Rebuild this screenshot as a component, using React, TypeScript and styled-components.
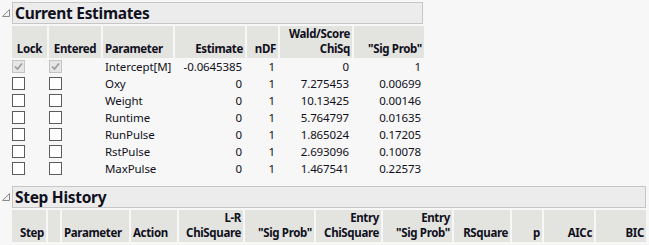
import styled, { createGlobalStyle } from 'styled-components';

const Global = createGlobalStyle`
  body {
    margin: 0;
    background: #f7f7f7;
    font-family: "Noto Sans", "Open Sans", sans-serif;
    color: #101020;
  }
`;

const Page = styled.div`
  width: 649px;
  height: 245px;
  overflow: hidden;
  padding-top: 2px;
  box-sizing: border-box;
`;

const Outline = styled.div<{ width: number; gapBelow: number }>`
  width: ${(p) => p.width + 12}px;
  margin-bottom: ${(p) => p.gapBelow}px;
`;

const TitleRow = styled.div`
  display: flex;
  align-items: center;
`;

const Toggle = styled.div`
  width: 12px;
  height: 22px;
  display: flex;
  align-items: center;
  justify-content: center;
`;

const TitleBar = styled.div`
  flex: 1;
  height: 22px;
  box-sizing: border-box;
  background: #ececec;
  border: 1px solid #c6c6c6;
  font-weight: 700;
  font-size: 15.5px;
  line-height: 20px;
  padding-left: 2px;
  letter-spacing: -0.3px;
`;

const Body = styled.div`
  padding-left: 12px;
  padding-top: 2px;
`;

const Grid = styled.div<{ cols: string }>`
  display: grid;
  grid-template-columns: ${(p) => p.cols};
  column-gap: 2px;
  font-size: 11.5px;
`;

const Head = styled.div<{ align: string }>`
  background: #e3e3df;
  height: 32px;
  box-sizing: border-box;
  display: flex;
  flex-direction: column;
  justify-content: flex-end;
  align-items: ${(p) => p.align};
  text-align: ${(p) => (p.align === 'flex-end' ? 'right' : p.align === 'center' ? 'center' : 'left')};
  font-weight: 700;
  line-height: 15px;
  padding: 0 2px 2px 2px;
  white-space: nowrap;
  letter-spacing: -0.35px;
  overflow: hidden;
`;

const Cell = styled.div<{ align: string }>`
  height: 17px;
  line-height: 17px;
  text-align: ${(p) => p.align};
  padding: 0 3px 0 2px;
  white-space: nowrap;
  letter-spacing: -0.1px;
`;

const BoxCell = styled.div`
  height: 17px;
  display: flex;
  align-items: center;
`;

const Box = styled.div<{ checked?: boolean }>`
  width: 13px;
  height: 13px;
  box-sizing: border-box;
  border: 1px solid ${(p) => (p.checked ? '#c4c4c4' : '#5c5c5c')};
  background: ${(p) => (p.checked ? '#e6e6e6' : '#ffffff')};
  display: flex;
  align-items: center;
  justify-content: center;
`;

function Disclosure() {
  return (
    <Toggle>
      <svg width="10" height="10" viewBox="0 0 10 10">
        <polygon points="8.5,1.5 8.5,8.5 1.5,8.5" fill="#f2f2f2" stroke="#8a8a8a" strokeWidth="1" />
      </svg>
    </Toggle>
  );
}

function Check({ checked }: { checked?: boolean }) {
  return (
    <BoxCell>
      <Box checked={checked}>
        {checked && (
          <svg width="11" height="11" viewBox="0 0 11 11">
            <polyline points="2,5.5 4.5,8 9,2.5" fill="none" stroke="#9a9a9a" strokeWidth="1.6" />
          </svg>
        )}
      </Box>
    </BoxCell>
  );
}

const estimates = [
  ['Intercept[M]', '-0.0645385', '1', '0', '1'],
  ['Oxy', '0', '1', '7.275453', '0.00699'],
  ['Weight', '0', '1', '10.13425', '0.00146'],
  ['Runtime', '0', '1', '5.764797', '0.01635'],
  ['RunPulse', '0', '1', '1.865024', '0.17205'],
  ['RstPulse', '0', '1', '2.693096', '0.10078'],
  ['MaxPulse', '0', '1', '1.467541', '0.22573'],
];

const stepHeads: [string, string][] = [
  ['Step', 'flex-end'],
  ['', 'flex-start'],
  ['Parameter', 'flex-start'],
  ['Action', 'flex-start'],
  ['L-R\nChiSquare', 'flex-end'],
  ['"Sig Prob"', 'flex-end'],
  ['Entry\nChiSquare', 'flex-end'],
  ['Entry\n"Sig Prob"', 'flex-end'],
  ['RSquare', 'flex-end'],
  ['p', 'flex-end'],
  ['AICc', 'flex-end'],
  ['BIC', 'flex-end'],
];

function HeadText({ text }: { text: string }) {
  return (
    <>
      {text.split('\n').map((l, i) => (
        <span key={i}>{l}</span>
      ))}
    </>
  );
}

export default function App() {
  return (
    <>
      <Global />
      <Page>
        <Outline width={411} gapBelow={9}>
          <TitleRow>
            <Disclosure />
            <TitleBar>Current Estimates</TitleBar>
          </TitleRow>
          <Body>
            <Grid cols="35px 52px 70px 70px 31px 72px 70px">
              <Head align="center">Lock</Head>
              <Head align="center">Entered</Head>
              <Head align="flex-start">Parameter</Head>
              <Head align="flex-end">Estimate</Head>
              <Head align="flex-end">nDF</Head>
              <Head align="flex-end">
                <HeadText text={'Wald/Score\nChiSq'} />
              </Head>
              <Head align="flex-end">"Sig Prob"</Head>
              {estimates.map((r, i) => (
                <>
                  <Check key={'l' + i} checked={i === 0} />
                  <Check key={'e' + i} checked={i === 0} />
                  <Cell key={'p' + i} align="left">{r[0]}</Cell>
                  <Cell key={'s' + i} align="right">{r[1]}</Cell>
                  <Cell key={'n' + i} align="right">{r[2]}</Cell>
                  <Cell key={'c' + i} align="right">{r[3]}</Cell>
                  <Cell key={'g' + i} align="right">{r[4]}</Cell>
                </>
              ))}
            </Grid>
          </Body>
        </Outline>
        <Outline width={634} gapBelow={0}>
          <TitleRow>
            <Disclosure />
            <TitleBar>Step History</TitleBar>
          </TitleRow>
          <Body>
            <Grid cols="34px 12px 67px 46px 64px 69px 65px 69px 56px 30px 50px 50px">
              {stepHeads.map(([t, a], i) => (
                <Head key={i} align={a}>
                  <HeadText text={t} />
                </Head>
              ))}
            </Grid>
          </Body>
        </Outline>
      </Page>
    </>
  );
}
